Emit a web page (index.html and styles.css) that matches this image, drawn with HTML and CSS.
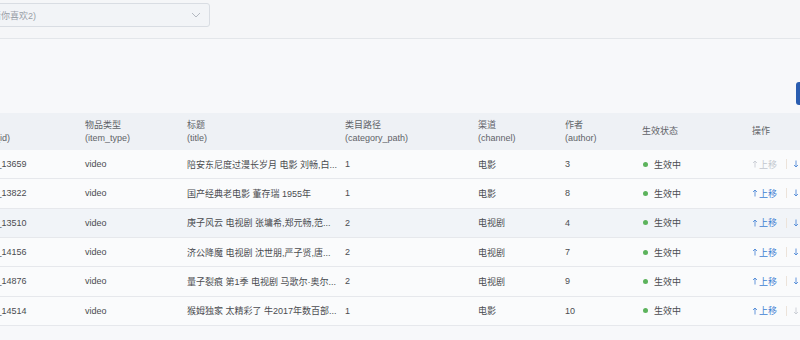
FILE: index.html
```html
<!DOCTYPE html>
<html lang="zh-CN">
<head>
  <meta charset="UTF-8" />
  <meta name="viewport" content="width=device-width, initial-scale=1.0" />
  <link rel="stylesheet" href="styles.css">
</head>
<body>

  <div class="topbar">
    <div class="select">
      <span class="select-text">(猜你喜欢2)</span>
      <svg class="chevron" width="10" height="6" viewBox="0 0 10 6"><path d="M1 1l4 4 4-4" fill="none" stroke="#b4b9c1" stroke-width="1"/></svg>
    </div>
  </div>

  <div class="toolbar">
    <button class="btn-primary">新增</button>
  </div>

  <table class="grid">
    <colgroup>
      <col style="width:110px"><col style="width:102px"><col style="width:158px"><col style="width:133px">
      <col style="width:87px"><col style="width:77px"><col style="width:110px"><col style="width:100px">
    </colgroup>
    <thead>
      <tr>
        <th>ID<br>(item_id)</th>
        <th>物品类型<br>(item_type)</th>
        <th>标题<br>(title)</th>
        <th>类目路径<br>(category_path)</th>
        <th>渠道<br>(channel)</th>
        <th>作者<br>(author)</th>
        <th>生效状态</th>
        <th>操作</th>
      </tr>
    </thead>
    <tbody>
      <tr>
        <td>video_13659</td><td>video</td><td>陪安东尼度过漫长岁月 电影 刘畅,白...</td><td>1</td><td>电影</td><td>3</td>
        <td><span class="dot"></span>生效中</td>
        <td><div class="ops"><span class="op disabled"><svg class="arrow" width="6" height="8" viewBox="0 0 6 8"><path d="M3 7.5V1M1 3l2-2 2 2" fill="none" stroke="currentColor" stroke-width="0.8"/></svg>上移</span><span class="sep"></span><span class="op"><svg class="arrow" width="6" height="8" viewBox="0 0 6 8"><path d="M3 .5V7M1 5l2 2 2-2" fill="none" stroke="currentColor" stroke-width="0.8"/></svg>下移</span></div></td>
      </tr>
      <tr>
        <td>video_13822</td><td>video</td><td>国产经典老电影 董存瑞 1955年</td><td>1</td><td>电影</td><td>8</td>
        <td><span class="dot"></span>生效中</td>
        <td><div class="ops"><span class="op"><svg class="arrow" width="6" height="8" viewBox="0 0 6 8"><path d="M3 7.5V1M1 3l2-2 2 2" fill="none" stroke="currentColor" stroke-width="0.8"/></svg>上移</span><span class="sep"></span><span class="op"><svg class="arrow" width="6" height="8" viewBox="0 0 6 8"><path d="M3 .5V7M1 5l2 2 2-2" fill="none" stroke="currentColor" stroke-width="0.8"/></svg>下移</span></div></td>
      </tr>
      <tr class="hover">
        <td>video_13510</td><td>video</td><td>庚子风云 电视剧 张墉希,郑元畅,范...</td><td>2</td><td>电视剧</td><td>4</td>
        <td><span class="dot"></span>生效中</td>
        <td><div class="ops"><span class="op"><svg class="arrow" width="6" height="8" viewBox="0 0 6 8"><path d="M3 7.5V1M1 3l2-2 2 2" fill="none" stroke="currentColor" stroke-width="0.8"/></svg>上移</span><span class="sep"></span><span class="op"><svg class="arrow" width="6" height="8" viewBox="0 0 6 8"><path d="M3 .5V7M1 5l2 2 2-2" fill="none" stroke="currentColor" stroke-width="0.8"/></svg>下移</span></div></td>
      </tr>
      <tr>
        <td>video_14156</td><td>video</td><td>济公降魔 电视剧 沈世朋,严子贤,唐...</td><td>2</td><td>电视剧</td><td>7</td>
        <td><span class="dot"></span>生效中</td>
        <td><div class="ops"><span class="op"><svg class="arrow" width="6" height="8" viewBox="0 0 6 8"><path d="M3 7.5V1M1 3l2-2 2 2" fill="none" stroke="currentColor" stroke-width="0.8"/></svg>上移</span><span class="sep"></span><span class="op"><svg class="arrow" width="6" height="8" viewBox="0 0 6 8"><path d="M3 .5V7M1 5l2 2 2-2" fill="none" stroke="currentColor" stroke-width="0.8"/></svg>下移</span></div></td>
      </tr>
      <tr>
        <td>video_14876</td><td>video</td><td>量子裂痕 第1季 电视剧 马歌尔·奥尔...</td><td>2</td><td>电视剧</td><td>9</td>
        <td><span class="dot"></span>生效中</td>
        <td><div class="ops"><span class="op"><svg class="arrow" width="6" height="8" viewBox="0 0 6 8"><path d="M3 7.5V1M1 3l2-2 2 2" fill="none" stroke="currentColor" stroke-width="0.8"/></svg>上移</span><span class="sep"></span><span class="op"><svg class="arrow" width="6" height="8" viewBox="0 0 6 8"><path d="M3 .5V7M1 5l2 2 2-2" fill="none" stroke="currentColor" stroke-width="0.8"/></svg>下移</span></div></td>
      </tr>
      <tr>
        <td>video_14514</td><td>video</td><td>猴姆独家 太精彩了 牛2017年数百部...</td><td>1</td><td>电影</td><td>10</td>
        <td><span class="dot"></span>生效中</td>
        <td><div class="ops"><span class="op"><svg class="arrow" width="6" height="8" viewBox="0 0 6 8"><path d="M3 7.5V1M1 3l2-2 2 2" fill="none" stroke="currentColor" stroke-width="0.8"/></svg>上移</span><span class="sep"></span><span class="op disabled"><svg class="arrow" width="6" height="8" viewBox="0 0 6 8"><path d="M3 .5V7M1 5l2 2 2-2" fill="none" stroke="currentColor" stroke-width="0.8"/></svg>下移</span></div></td>
      </tr>
    </tbody>
  </table>

</body>
</html>
```

FILE: styles.css
```css
body {
  margin: 0;
  width: 800px;
  height: 340px;
  overflow: hidden;
  background: #f7f8fa;
  color: #4a4c50;
  font-family: "Liberation Sans", "Noto Sans CJK SC", sans-serif;
  font-size: 9px;
}

.topbar {
  padding: 3px 0 11px;
  border-bottom: 1px solid #e3e6ea;
  background: #f5f6f8;
}

.select {
  display: flex;
  align-items: center;
  justify-content: space-between;
  width: 232px;
  height: 24px;
  margin-left: -22px;
  padding: 0 8px 0 10px;
  box-sizing: border-box;
  border: 1px solid #d9dde3;
  border-radius: 3px;
  background: #f2f4f7;
}

.select-text {
  color: #9aa0a8;
}

.toolbar {
  display: flex;
  justify-content: flex-end;
  margin-top: 43px;
  margin-right: -60px;
}

.btn-primary {
  width: 64px;
  height: 23px;
  border: none;
  border-radius: 3px;
  background: #2a5db0;
  color: #fff;
  font: inherit;
}

.grid {
  margin-top: 8px;
  margin-left: -33px;
  width: 877px;
  table-layout: fixed;
  border-collapse: collapse;
}

.grid th {
  height: 37px;
  padding: 0 4px 0 8px;
  background: #eef1f5;
  color: #5f6368;
  font-weight: normal;
  text-align: left;
  line-height: 13px;
}

.grid td {
  height: 28.33px;
  padding: 0 4px 0 8px;
  border-bottom: 1px solid #e6e8ec;
  background: #fafbfc;
  white-space: nowrap;
  overflow: hidden;
}

.grid tr.hover td {
  background: #f1f4f8;
}

.dot {
  display: inline-block;
  width: 5px;
  height: 5px;
  margin: 0 6px 0 1px;
  border-radius: 50%;
  background: #5cb35c;
  vertical-align: 1px;
}

.ops {
  display: flex;
  align-items: center;
}

.op {
  display: inline-flex;
  align-items: center;
  color: #3f7fd3;
}

.op.disabled {
  color: #c3c8cf;
}

.arrow {
  margin-right: 1px;
}

.sep {
  width: 1px;
  height: 10px;
  margin: 0 6px 0 9px;
  background: #ece3da;
}
```
